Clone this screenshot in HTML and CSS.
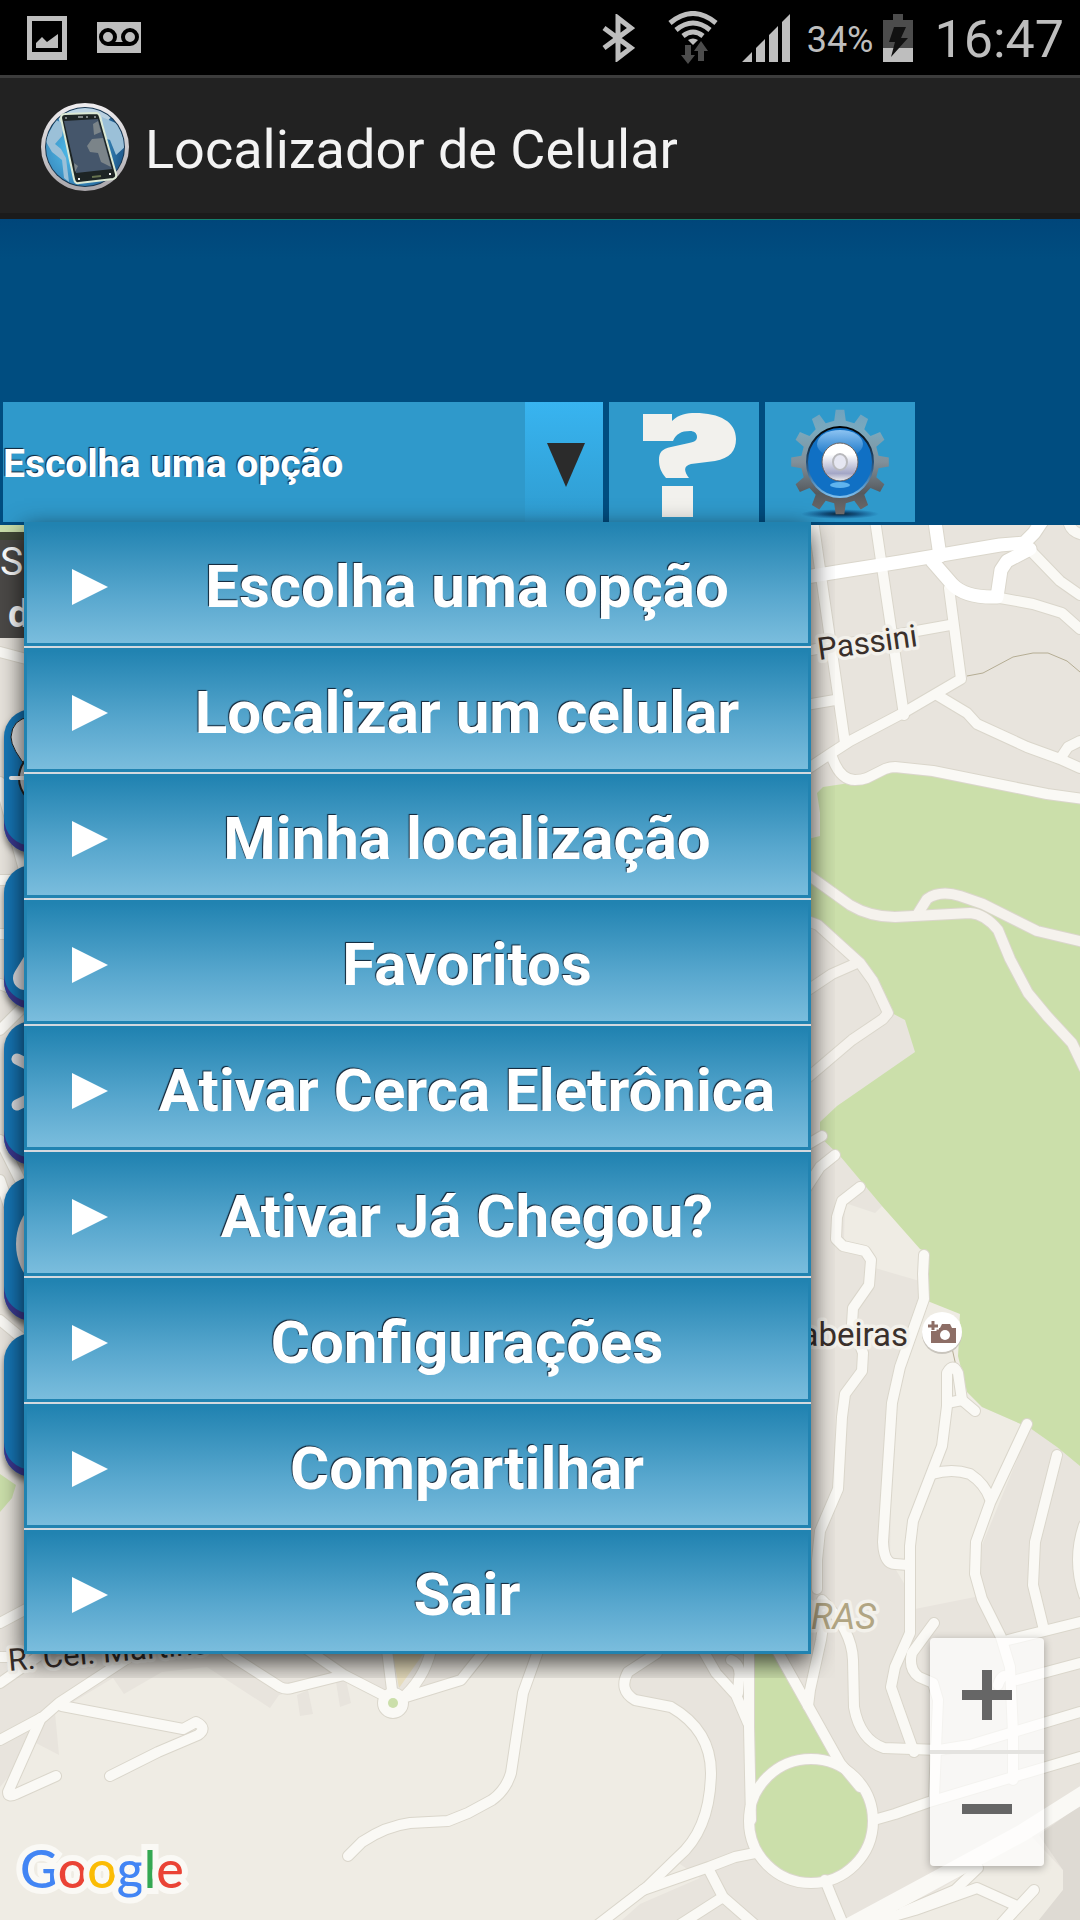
FILE: index.html
```html
<!DOCTYPE html>
<html lang="pt-BR">
<head>
    <meta charset="UTF-8">
    <meta name="viewport" content="width=device-width, initial-scale=1.0">
    <title>Localizador de Celular</title>
    <link rel="stylesheet" href="styles.css">
</head>
<body>
    <div class="status-bar">
        <svg class="status-picture" width="40" height="44" viewBox="0 0 40 44">
            <path fill="#bebebe" fill-rule="evenodd" d="M0 0H40V44H0ZM5 5V36H35V5Z"/>
            <path fill="#bebebe" d="M9 32V27L15 21L20 26L31 18V32Z"/>
        </svg>
        <svg width="44" height="31" viewBox="0 0 44 31">
            <rect width="44" height="31" fill="#bebebe"/>
            <g fill="none" stroke="#000" stroke-width="4">
                <circle cx="11" cy="15" r="7"/>
                <circle cx="33" cy="15" r="7"/>
                <path d="M11 22H33"/>
            </g>
        </svg>
        <div class="status-right">
            <svg width="33" height="48" viewBox="0 0 33 48">
                <path fill="none" stroke="#bebebe" stroke-width="5" d="M2 14L29 34L16 44V4L29 14L2 34"/>
            </svg>
            <svg class="status-wifi" width="50" height="54" viewBox="0 0 50 54">
                <g fill="none" stroke="#bebebe" stroke-width="5">
                    <path d="M2 12Q25 -7 48 12"/>
                    <path d="M8 19Q25 5 42 19"/>
                    <path d="M15 25Q25 17 35 25"/>
                </g>
                <path fill="#bebebe" d="M20 29Q25 26 30 29L25 34Z"/>
                <path fill="#4c4c4c" d="M17 34H23V44H27L20 53L13 44H17ZM33 30L40 40H36V50H30V40H26Z"/>
            </svg>
            <svg width="48" height="48" viewBox="0 0 48 48">
                <path fill="#bebebe" d="M0 48L10 38V48ZM14 48V34L23 25V48ZM27 48V21L36 12V48ZM40 48V8L48 0V48Z"/>
            </svg>
            <span class="battery-level">34%</span>
            <svg class="status-battery" width="30" height="48" viewBox="0 0 30 48">
                <path fill="#4c4c4c" d="M0 6H10V0H20V6H30V34H0Z"/>
                <path fill="#bebebe" d="M0 34H30V48H0Z"/>
                <path fill="#111" d="M11 13H23L18 24H25L8 43L12 28H6Z"/>
            </svg>
            <span class="clock">16:47</span>
        </div>
    </div>

    <header class="app-header">
        <svg width="90" height="90" viewBox="0 0 90 90">
            <defs>
                <radialGradient id="globe" cx="35%" cy="55%" r="60%">
                    <stop offset="0" stop-color="#4fc0ee"/>
                    <stop offset="0.6" stop-color="#3d91c4"/>
                    <stop offset="1" stop-color="#225f92"/>
                </radialGradient>
                <linearGradient id="ring" x1="0" y1="0" x2="0" y2="1">
                    <stop offset="0" stop-color="#f0eef0"/>
                    <stop offset="1" stop-color="#a9a6aa"/>
                </linearGradient>
                <clipPath id="globeClip"><circle cx="45" cy="45" r="39"/></clipPath>
            </defs>
            <circle cx="45" cy="45" r="44" fill="url(#ring)"/>
            <circle cx="45" cy="45" r="40" fill="#19364f"/>
            <circle cx="45" cy="45" r="39" fill="url(#globe)"/>
            <g clip-path="url(#globeClip)">
                <path fill="#e1edf4" opacity="0.8" d="M18 14Q45 -3 72 14L65 22H20Z"/>
                <path fill="#9bc0d8" d="M5 38L16 18L24 22L22 34L15 42L21 47L26 56L29 80L24 76L22 58L12 50ZM62 15L78 22L86 44L76 53L70 38L64 36Z"/>
            </g>
            <path fill="#1d2424" stroke="#dce9d4" stroke-width="2" stroke-linejoin="round" d="M21 16Q21 12 25 12L56 11Q59 11 60 15L76 72Q77 76 73 77L39 81Q35 82 34 77Z"/>
            <path fill="#45566b" d="M24 19L58 17L72 67L36 71Z"/>
            <path fill="#7b8489" d="M47 44L52 37L63 36L71 65L61 60L58 51L50 50ZM53 22L58 19L61 30L54 33ZM34 61L38 64L35 70Z"/>
            <path stroke="#dfe4e4" stroke-width="1" d="M38 15H43M46 15H48M25 16H27M54 15H56"/>
            <path stroke="#66724f" stroke-width="2" d="M52 75L61 74"/>
            <path stroke="#eee" stroke-width="2" d="M38 77H40M69 72H71"/>
        </svg>
        <h1>Localizador de Celular</h1>
    </header>

    <div class="toolbar">
        <div class="picker">
            <select id="opcao" aria-label="Escolha uma opção">
                <option>Escolha uma opção</option>
                <option>Localizar um celular</option>
                <option>Minha localização</option>
                <option>Favoritos</option>
                <option>Ativar Cerca Eletrônica</option>
                <option>Ativar Já Chegou?</option>
                <option>Configurações</option>
                <option>Compartilhar</option>
                <option>Sair</option>
            </select>
        </div>
        <button class="tool" type="button" aria-label="Ajuda">
            <svg width="150" height="120" viewBox="0 0 150 120">
                <path fill="#f2f1ed" d="M34 12H63V19C70 12 78 11 86 11C111 11 127 20 127 37C127 49 121 56 106 59L82 62C74 64 75 69 80 76H57C52 70 50 65 50 58C50 50 53 47 62 45L80 41C86 40 88 38 88 35C88 31 85 29 81 29C72 29 67 32 64 39H34ZM53 84H84V115H53Z"/>
            </svg>
        </button>
        <button class="tool" type="button" aria-label="Ajustes">
            <svg width="150" height="120" viewBox="0 0 150 120">
                <defs>
                    <linearGradient id="gear" x1="0" y1="0" x2="0" y2="1">
                        <stop offset="0" stop-color="#6fa3bf"/>
                        <stop offset="0.2" stop-color="#7ba9bd"/>
                        <stop offset="0.5" stop-color="#81909a"/>
                        <stop offset="0.8" stop-color="#55595d"/>
                        <stop offset="1" stop-color="#6f6a6a"/>
                    </linearGradient>
                    <linearGradient id="hub" x1="0" y1="0" x2="0" y2="1">
                        <stop offset="0.3" stop-color="#fff"/>
                        <stop offset="0.8" stop-color="#a3a6c6"/>
                        <stop offset="1" stop-color="#eee"/>
                    </linearGradient>
                    <linearGradient id="gloss" x1="0" y1="0" x2="0" y2="1">
                        <stop offset="0" stop-color="#8cc3f2"/>
                        <stop offset="1" stop-color="#1070c4"/>
                    </linearGradient>
                    <linearGradient id="rim" x1="0" y1="0" x2="0" y2="1">
                        <stop offset="0" stop-color="#000"/>
                        <stop offset="0.6" stop-color="#2c5f8e"/>
                        <stop offset="1" stop-color="#7dc0f0"/>
                    </linearGradient>
                    <radialGradient id="gearShadow">
                        <stop offset="0" stop-color="#0a2433"/>
                        <stop offset="0.4" stop-color="#0a3a66" stop-opacity="0.8"/>
                        <stop offset="1" stop-color="#0a4a86" stop-opacity="0"/>
                    </radialGradient>
                </defs>
                <ellipse cx="75" cy="112" rx="39" ry="5" fill="url(#gearShadow)"/>
                <path transform="translate(75 60) scale(1 1.07)" fill="url(#gear)" d="M-5.8 -38.6L-4.3 -48.8H4.3L5.8 -38.6L14.3 -36.3L20.7 -44.4L28.1 -40.1L24.3 -30.5L30.5 -24.3L40.1 -28.1L44.4 -20.7L36.3 -14.3L38.6 -5.8L48.8 -4.3V4.3L38.6 5.8L36.3 14.3L44.4 20.7L40.1 28.1L30.5 24.3L24.3 30.5L28.1 40.1L20.7 44.4L14.3 36.3L5.8 38.6L4.3 48.8H-4.3L-5.8 38.6L-14.3 36.3L-20.7 44.4L-28.1 40.1L-24.3 30.5L-30.5 24.3L-40.1 28.1L-44.4 20.7L-36.3 14.3L-38.6 5.8L-48.8 4.3V-4.3L-38.6 -5.8L-36.3 -14.3L-44.4 -20.7L-40.1 -28.1L-30.5 -24.3L-24.3 -30.5L-28.1 -40.1L-20.7 -44.4L-14.3 -36.3Z"/>
                <ellipse cx="75" cy="60" rx="33" ry="35" fill="#1070c4" stroke="url(#rim)" stroke-width="2"/>
                <ellipse cx="75" cy="42" rx="23" ry="14" fill="url(#gloss)"/>
                <ellipse cx="75" cy="83" rx="10" ry="3" fill="#5fb4ee"/>
                <ellipse cx="75" cy="60" rx="18" ry="19" fill="url(#hub)" stroke="#68605e" stroke-width="1"/>
                <ellipse cx="75" cy="60" rx="7" ry="8" fill="#e6e7f2" stroke="#b9b9bd" stroke-width="2"/>
            </svg>
        </button>

        <ul class="menu">
            <li><button type="button">Escolha uma opção</button></li>
            <li><button type="button">Localizar um celular</button></li>
            <li><button type="button">Minha localização</button></li>
            <li><button type="button">Favoritos</button></li>
            <li><button type="button">Ativar Cerca Eletrônica</button></li>
            <li><button type="button">Ativar Já Chegou?</button></li>
            <li><button type="button">Configurações</button></li>
            <li><button type="button">Compartilhar</button></li>
            <li><button type="button">Sair</button></li>
        </ul>
    </div>

    <main class="map">
        <svg class="map-canvas" viewBox="0 525 1080 1395" preserveAspectRatio="xMinYMin slice">
            <defs>
                <g id="streets">
                    <!-- north -->
                    <path d="M813 520L845 743"/>
                    <path d="M875 520L904 715"/>
                    <path d="M949 588L961 679L903 713L850 741L830 754L800 774"/>
                    <path d="M800 652L950 625"/>
                    <path d="M800 706L835 700"/>
                    <path d="M1030 550L1060 581L1080 595"/>
                    <path d="M1000 598L1033 604L1062 613L1080 629"/>
                    <path d="M1068 515Q1067 532 1084 535"/>
                    <path d="M937 695L967 713L977 724L1027 747L1060 759L1080 768"/>
                    <path d="M1062 756L1068 747L1080 741"/>
                    <path d="M832 757Q840 780 855 780Q862 780 867 778L885 769Q890 767 895 767L933 771L1047 794L1084 799"/>
                    <!-- east -->
                    <path d="M800 1149L822 1136"/>
                    <path d="M805 1190L820 1167L835 1155"/>
                    <path d="M860 1187L842 1201L837 1217L836 1239L843 1246L865 1251L871 1260L869 1285L853 1308L852 1324L863 1353L862 1371L845 1394L842 1417L838 1489L820 1531L817 1560L817 1589"/>
                    <path d="M924 1255L923 1274L924 1299L900 1367L892 1403L883 1542Q884 1564 895 1564L908 1565"/>
                    <path d="M975 1411L962 1400L958 1373Q953 1362 947 1373V1406L942 1446L913 1521L910 1546V1633L895 1667L891 1687L898 1707L914 1752"/>
                    <path d="M947 1403L962 1400"/>
                    <path d="M932 1474Q952 1468 970 1474Q985 1484 990 1499"/>
                    <path d="M1027 1424L990 1503L976 1542L975 1574L982 1599L1001 1637L1010 1667L1013 1733V1780"/>
                    <path d="M1057 1455L1035 1542L1033 1585L1044 1630"/>
                    <path d="M1084 1525Q1072 1560 1084 1595"/>
                    <path d="M1008 1640L1080 1622"/>
                    <path d="M1017 1680L1080 1663"/>
                    <path d="M998 1685Q1000 1678 1004 1676"/>
                    <path d="M822 1600Q852 1630 853 1660L854 1707Q860 1740 884 1748L939 1750L970 1745L1080 1712"/>
                    <path d="M934 1623L912 1653Q908 1669 919 1677L933 1683L938 1700L934 1797"/>
                    <path d="M874 1820L895 1814L929 1802L1080 1757"/>
                    <!-- south -->
                    <path d="M749 1645V1727L751 1820"/>
                    <path d="M774 1645L840 1763L860 1787"/>
                    <path d="M826 1607L821 1640L810 1690L808 1706"/>
                    <path d="M700 1645L716 1673L736 1695L748 1723"/>
                    <path d="M731 1660Q742 1665 739 1680L738 1693"/>
                    <path d="M657 1653L628 1672Q618 1690 635 1700L671 1707Q711 1730 711 1773Q710 1830 678 1857L647 1887L599 1924"/>
                    <path d="M643 1890L709 1867L735 1857L755 1853"/>
                    <path d="M709 1870L723 1897L754 1924M723 1897L681 1924"/>
                    <path d="M825 1880L831 1895L843 1924"/>
                    <circle cx="811" cy="1821" r="62"/>
                    <path d="M978 1868L955 1890L903 1912"/>
                    <path d="M880 1920L915 1910L977 1888L1017 1906L1001 1924M1034 1890L1006 1920"/>
                    <!-- south west -->
                    <path d="M0 1740L43 1717L59 1703L140 1650"/>
                    <path d="M62 1706L183 1729L196 1722Q208 1728 198 1735L158 1752L110 1776"/>
                    <path d="M41 1718L8 1792Q8 1798 16 1794L56 1776"/>
                    <path d="M0 1683L40 1655M0 1623L30 1607M0 1657H20"/>
                    <path d="M227 1653L280 1687Q286 1690 292 1688L344 1675M305 1648L344 1675L385 1696"/>
                    <path d="M387 1650L393 1698M431 1650Q424 1680 400 1700M406 1697L461 1680L485 1650"/>
                    <path d="M542 1640L523 1693L511 1773Q506 1790 492 1800L468 1813L448 1821L410 1823Q386 1826 362 1842L348 1856"/>
                    <circle cx="393" cy="1703" r="10"/>
                    <!-- west edge -->
                    <path d="M0 652L30 660M0 782L24 870M0 880H30M0 934H24M0 984L30 996M0 1030L30 1000M0 1140L30 1200M0 1180L24 1250M0 1320L30 1345"/>
                </g>
                <g id="avenues">
                    <path d="M800 578L843 571L900 562L1000 545L1024 543L1034 533L1046 515"/>
                    <path d="M934 515L940 556"/>
                    <path d="M932 561L952 584Q965 598 997 597L1001 570L1007 561L1030 549"/>
                </g>
                <g id="parkways">
                    <path d="M800 869L850 905Q870 917 895 917L970 913Q985 914 998 930L1010 959L1028 993L1047 1016L1072 1043L1084 1068"/>
                    <path d="M917 915L927 899Q940 890 960 896L983 904L1037 931L1084 942"/>
                    <path d="M805 920L818 925L860 963L873 981L888 1013L883 1019L852 1040L805 1080"/>
                    <path d="M857 963L832 974L805 992"/>
                </g>
            </defs>
            <rect x="0" y="520" width="1080" height="1400" fill="#e8e4dd"/>
            <path fill="#c9dea9" d="M0 520H24V540H0Z"/>
            <path fill="#efece4" d="M279 1695L344 1678L390 1700L420 1695L465 1680L500 1640H657L628 1672Q618 1690 635 1700L671 1707Q711 1730 711 1773Q710 1830 678 1857L680 1864L700 1878L640 1904L622 1920H0V1787L36 1743L59 1755L55 1713L113 1678L124 1694L162 1672L207 1667L270 1708Z"/>
            <path fill="#e8e4dd" d="M297 1695L300 1716L313 1714L308 1690ZM336 1682L340 1707L351 1703L346 1680Z"/>
            <path fill="#efece4" d="M845 1203L875 1213L882 1206L929 1253L923 1282L875 1268L844 1240Z"/>
            <path fill="#efece4" d="M924 1300L965 1322L982 1407L1030 1428L980 1550L975 1597L915 1609L908 1590L890 1560L892 1403Z"/>
            <path fill="#efece4" d="M905 1910L1030 1835L1063 1870V1890L1039 1920H900Z"/>
            <path fill="#dedad3" d="M1039 1835L1063 1870V1890L1039 1920H1080V1805Z"/>
            <path fill="#cbdfaa" d="M823 787L843 784L892 767L1080 800V1466L1057 1447L1030 1428L982 1407L967 1392L958 1356L960 1321L927 1306L929 1253L920 1249L882 1206L840 1156L820 1137V1122L837 1106L915 1052L905 1020L888 1011L872 970L800 915V841L820 836V813L817 793Z"/>
            <path fill="#efece4" d="M925 1300L960 1314L957 1356L966 1392L945 1390Z"/>
            <path fill="#cbdfaa" d="M754 1645H770L838 1763L755 1790ZM0 1474L16 1485L12 1498L0 1512Z"/>
            <circle cx="811" cy="1821" r="60" fill="#cbdfaa"/>
            <path fill="#e6dcbc" d="M392 1650H426L399 1688Z"/>
            <path fill="none" stroke="#b5ad94" stroke-width="1" d="M967 676L983 673L1013 657L1033 653H1048L1067 661L1080 672M952 1348L956 1366"/>
            <use href="#streets" class="street-casing"/>
            <use href="#parkways" class="street-casing"/>
            <use href="#avenues" class="avenue-casing"/>
            <use href="#streets" class="street"/>
            <use href="#parkways" class="parkway"/>
            <use href="#avenues" class="avenue"/>
            <path class="highway" d="M850 1926L939 1878L1022 1833L1090 1790"/>
            <circle cx="393" cy="1703" r="8" fill="#faf9f5"/>
            <circle cx="393" cy="1703" r="5" fill="#cbdfaa"/>

            <g class="map-label">
                <text class="street-name" x="819" y="660" transform="rotate(-8 819 660)">Passini</text>
                <text x="908" y="1346" text-anchor="end">Mangabeiras</text>
                <text class="street-name" x="9" y="1671" transform="rotate(-5 9 1671)">R. Cel. Martins</text>
                <text class="district" x="876" y="1629" text-anchor="end">MANGABEIRAS</text>
            </g>

            <circle cx="942" cy="1334" r="20" fill="#c9c5bd"/>
            <circle cx="942" cy="1332" r="20" fill="#fff"/>
            <path fill="#8d6e66" d="M931 1328H940L942 1324H950L952 1328H956V1343H931Z"/>
            <circle cx="945" cy="1335" r="5" fill="#fff"/>
            <path stroke="#fff" stroke-width="7" d="M933 1320V1331M928 1326H939"/>
            <path stroke="#8d6e66" stroke-width="3" d="M933 1321V1330M928 1326H938"/>
        </svg>

        <div class="info">
            <p>S</p>
            <p class="info-detail">d</p>
        </div>

        <div class="side-buttons">
            <button type="button" aria-label="Localizar">
                <svg viewBox="0 0 144 144">
                    <path fill="#dcdcdc" stroke="#222" stroke-width="1" d="M26 62Q7 40 7 28Q8 10 26 8Q44 10 45 28Q45 40 26 62Z"/>
                    <circle cx="43" cy="69" r="28" fill="#c4c6c9" stroke="#222" stroke-width="2"/>
                    <path stroke="#f4f4f4" stroke-width="4" stroke-linecap="round" d="M7 69H30"/>
                </svg>
            </button>
            <button type="button" aria-label="Alerta">
                <svg viewBox="0 0 144 144">
                    <path fill="#e4e4e8" stroke="#e4e4e8" stroke-width="24" stroke-linejoin="round" d="M21 113L72 30L123 113Z"/>
                </svg>
            </button>
            <button type="button" aria-label="Rotas">
                <svg viewBox="0 0 144 144">
                    <path stroke="#e4e4e8" stroke-width="11" stroke-linecap="round" d="M13 38L120 92M13 84L120 32"/>
                </svg>
            </button>
            <button type="button" aria-label="Chegada">
                <svg viewBox="0 0 144 144">
                    <circle cx="69" cy="67" r="57" fill="#d8d8da"/>
                </svg>
            </button>
            <button type="button" aria-label="Mais"></button>
        </div>

        <div class="google" aria-label="Google"><span class="g-blue">G</span><span class="g-red">o</span><span class="g-yellow">o</span><span class="g-blue">g</span><span class="g-green">l</span><span class="g-red">e</span></div>

        <div class="zoom">
            <button type="button" aria-label="Aumentar zoom">
                <svg width="50" height="50" viewBox="0 0 50 50"><path fill="#666" d="M20 0H30V20H50V30H30V50H20V30H0V20H20Z"/></svg>
            </button>
            <button type="button" aria-label="Diminuir zoom">
                <svg width="50" height="50" viewBox="0 0 50 50"><path fill="#666" d="M0 20H50V30H0Z"/></svg>
            </button>
        </div>
    </main>
</body>
</html>
```
FILE: styles.css
```css
* {
    box-sizing: border-box;
}

body {
    font-family: Roboto, "Liberation Sans", sans-serif;
    margin: 0;
    min-height: 100vh;
    display: flex;
    flex-direction: column;
    background-color: #efece4;
    overflow-x: hidden;
}

button {
    border: none;
    padding: 0;
    background: none;
    font-family: inherit;
    cursor: pointer;
}

svg {
    display: block;
}

/* status bar */
.status-bar {
    display: flex;
    align-items: center;
    gap: 30px;
    height: 75px;
    padding: 0 16px 0 27px;
    background-color: #000;
    color: #bebebe;
}

.status-right {
    display: flex;
    align-items: center;
    margin-left: auto;
}

.status-wifi {
    margin: 0 24px 0 33px;
}

.battery-level {
    margin-left: 17px;
    padding-top: 4px;
    font-size: 36px;
    line-height: 48px;
}

.status-battery {
    margin: 0 22px 0 9px;
}

.clock {
    padding-top: 4px;
    font-size: 52px;
    line-height: 71px;
}

/* title */
.app-header {
    display: flex;
    align-items: center;
    gap: 15px;
    height: 144px;
    padding: 2px 40px 0;
    border-top: 3px solid #3c3c3c;
    border-bottom: 6px solid #1b1b1b;
    background-color: #222;
}

h1 {
    margin: 0;
    padding-top: 6px;
    color: #f3f3f3;
    font-size: 54px;
    font-weight: 400;
}

/* toolbar */
.toolbar {
    position: relative;
    z-index: 2;
    display: flex;
    align-items: flex-end;
    gap: 6px;
    height: 306px;
    padding: 3px;
    background: linear-gradient(#00467a, #004d80 40px);
}

.toolbar::before {
    content: "";
    position: absolute;
    top: 0;
    left: 60px;
    right: 60px;
    height: 1px;
    background-color: #14806f;
}

.picker {
    position: relative;
    flex: 0 1 600px;
    height: 120px;
}

.picker select {
    appearance: none;
    width: 100%;
    height: 100%;
    padding: 4px 78px 0 0;
    border: none;
    border-radius: 0;
    background: linear-gradient(#38b4f0, #2f9cd0) right / 78px 100% no-repeat #2f99cb;
    color: #fff;
    font-family: inherit;
    font-size: 39px;
    font-weight: 700;
    text-shadow: -1px -1px 1px #123;
}

.picker::after {
    content: "";
    position: absolute;
    top: 41px;
    right: 18px;
    width: 38px;
    height: 44px;
    background-color: #2b2b2b;
    clip-path: polygon(0 0, 100% 0, 50% 100%);
    pointer-events: none;
}

.tool {
    flex: 0 0 150px;
    height: 120px;
    background-color: #2f99cb;
}

/* open menu, lies over the toolbar and the map */
.menu {
    position: absolute;
    top: calc(100% - 3px);
    left: 24px;
    right: 269px;
    display: flex;
    flex-direction: column;
    gap: 2px;
    margin: 0;
    padding: 0;
    list-style: none;
    background-color: #d3d9df;
    box-shadow: 0 8px 24px rgba(0, 0, 0, 0.75);
    clip-path: inset(-24px);
}

.menu button {
    position: relative;
    width: 100%;
    height: 124px;
    padding: 4px 0 0 99px;
    border: 3px solid #2183b1;
    background: linear-gradient(#2183b1, #58a7ce 60%, #7abddd);
    color: #fff;
    font-size: 60px;
    font-weight: 700;
    text-shadow: -1px -1px 1px #123;
}

.menu button::before {
    content: "";
    position: absolute;
    top: 44px;
    left: 45px;
    width: 36px;
    height: 36px;
    background-color: #fff;
    clip-path: polygon(0 0, 100% 50%, 0 100%);
}

/* map */
.map {
    position: relative;
    flex: 1;
    overflow: hidden;
}

.map-canvas {
    position: absolute;
    top: 0;
    left: 0;
    width: 100%;
    height: 100%;
}

.map-canvas use,
.highway {
    fill: none;
    stroke-linecap: round;
    stroke-linejoin: round;
}

.street-casing {
    stroke: #dad6cb;
    stroke-width: 12px;
}

.street {
    stroke: #faf9f5;
    stroke-width: 10px;
}

.parkway {
    stroke: #f5f2ed;
    stroke-width: 10px;
}

.avenue-casing {
    stroke: #dad6cb;
    stroke-width: 15px;
}

.avenue {
    stroke: #fff;
    stroke-width: 13px;
}

.highway {
    stroke: #faf9f5;
    stroke-width: 17px;
}

.map-label {
    fill: #3a302b;
    font-size: 33px;
    stroke: #f3f1eb;
    stroke-width: 7px;
    stroke-linejoin: round;
    paint-order: stroke;
}

.street-name {
    font-size: 31px;
}

.district {
    fill: #b1a583;
    font-size: 36px;
    font-style: italic;
}

.info {
    position: relative;
    width: 60%;
    margin-top: 7px;
    height: 106px;
    padding-top: 4px;
    background-color: rgba(0, 0, 0, 0.68);
    color: #fff;
    font-size: 39px;
    line-height: 52px;
}

.info p {
    margin: 0;
}

.info .info-detail {
    padding-left: 8px;
    font-weight: 700;
}

.side-buttons {
    position: relative;
    display: flex;
    flex-direction: column;
    gap: 12px;
    width: 144px;
    margin: 71px 0 0 4px;
}

.side-buttons button {
    height: 144px;
    border-radius: 28px;
    background-color: #1676b6;
    box-shadow: inset 0 -7px 0 #3a3890, 0 5px 6px rgba(0, 0, 0, 0.5);
}

.google {
    position: absolute;
    left: 20px;
    bottom: 20px;
    font-family: Lato, sans-serif;
    font-size: 52px;
    font-weight: 500;
    line-height: 64px;
    -webkit-text-stroke: 12px #faf9f5;
    paint-order: stroke;
}

.g-blue {
    color: #4285f4;
}

.g-red {
    color: #ea4335;
}

.g-yellow {
    color: #fbbc05;
}

.g-green {
    color: #34a853;
}

.zoom {
    position: absolute;
    right: 36px;
    bottom: 54px;
    width: 114px;
    border-radius: 4px;
    background: linear-gradient(#e4e3e0, #e4e3e0) center / 100% 4px no-repeat rgba(255, 255, 255, 0.7);
    box-shadow: 0 2px 8px rgba(0, 0, 0, 0.3);
}

.zoom button {
    display: flex;
    align-items: center;
    justify-content: center;
    width: 100%;
    height: 114px;
}
```
